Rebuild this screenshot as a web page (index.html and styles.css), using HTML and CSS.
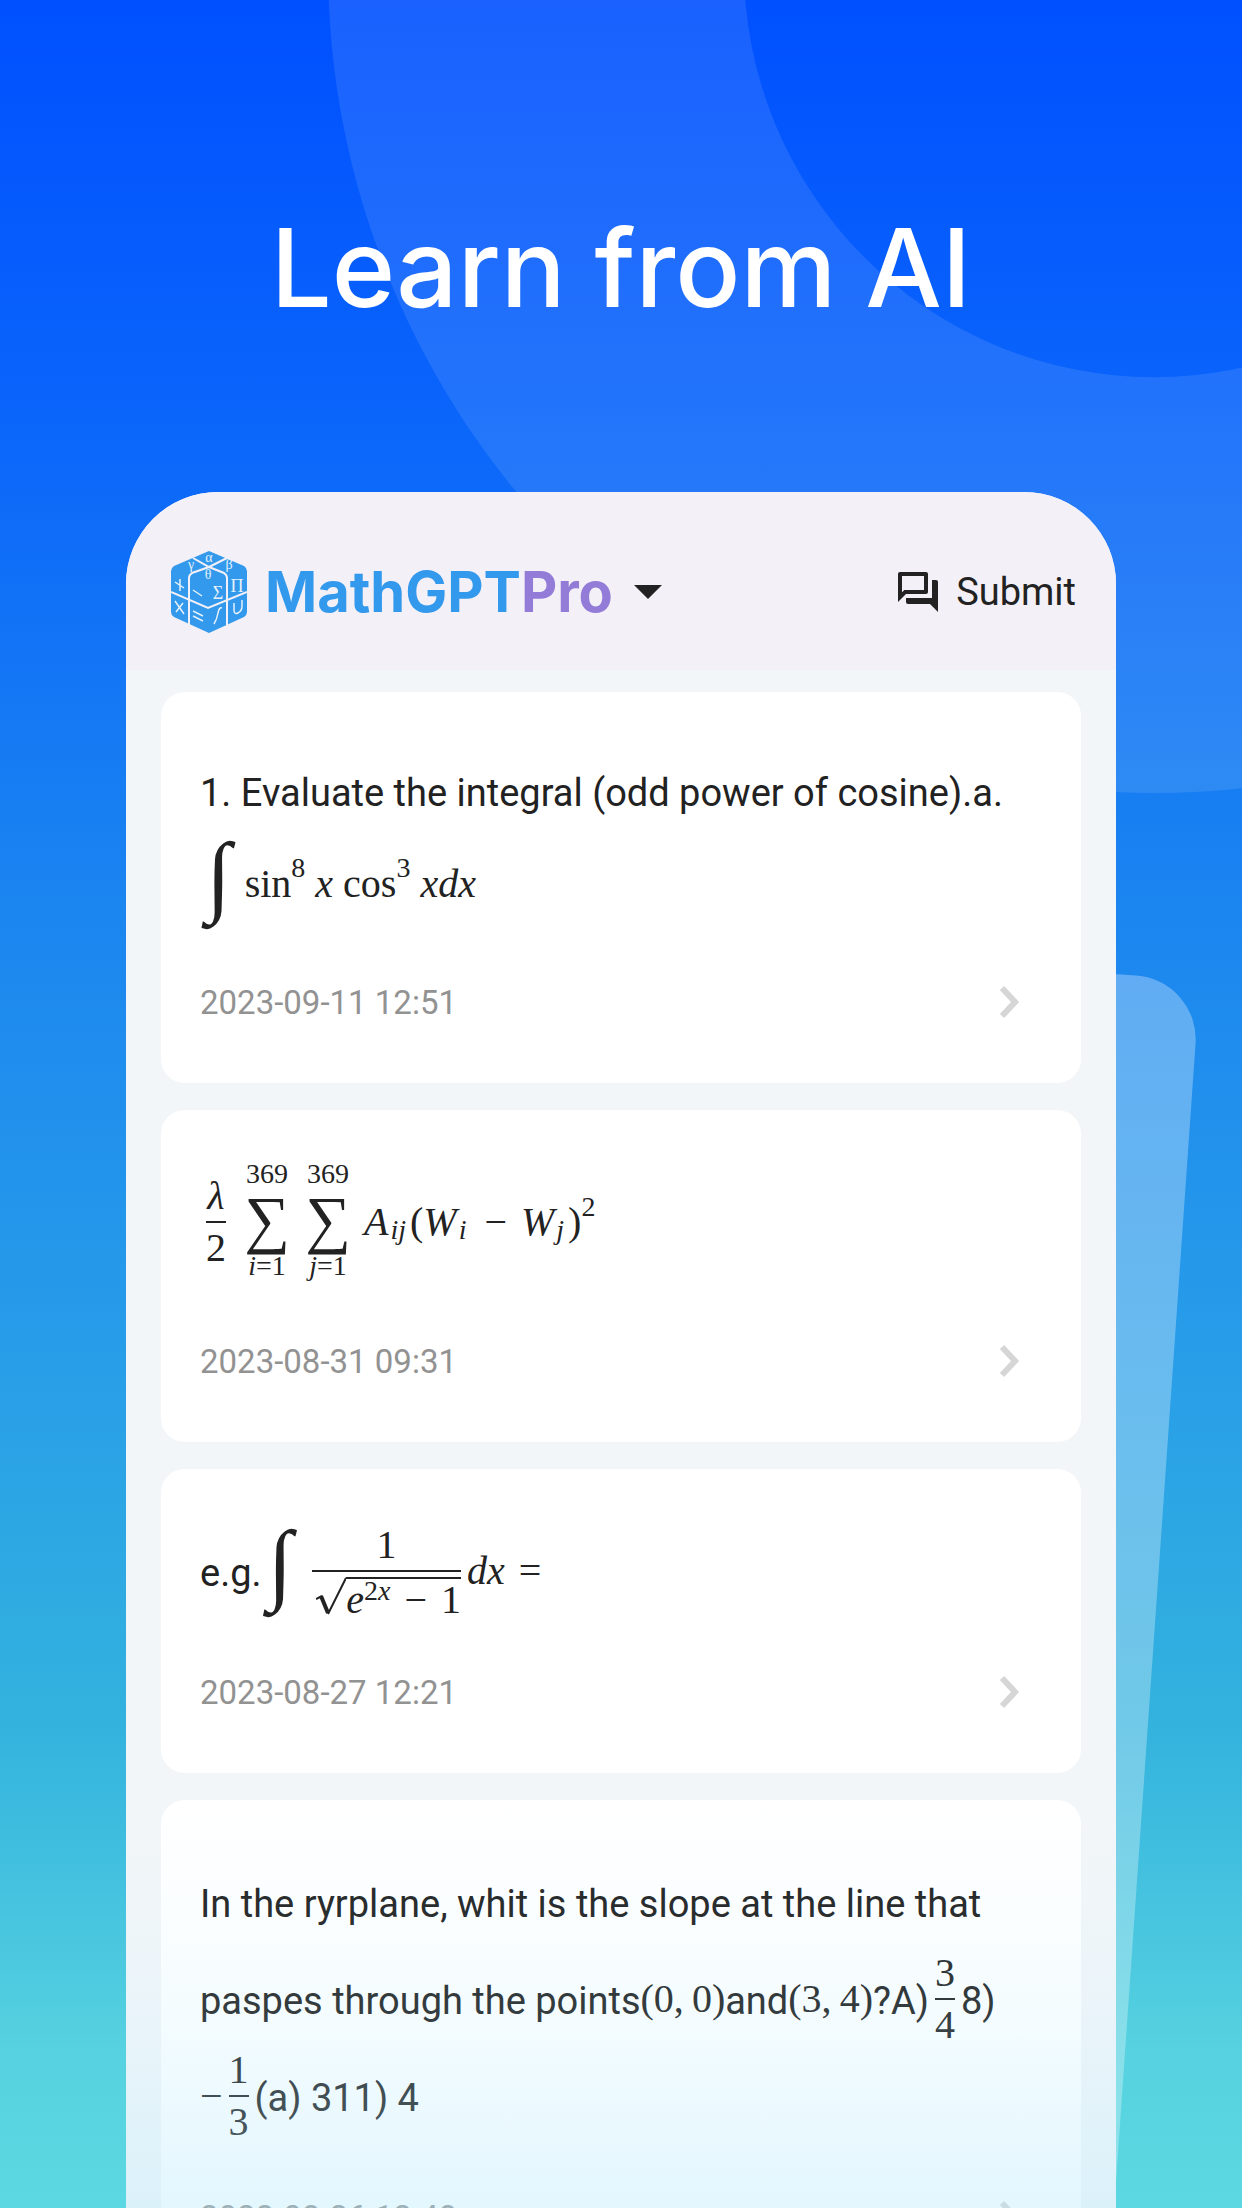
FILE: index.html
```html
<!DOCTYPE html>
<html lang="en">
<head>
<meta charset="utf-8">
<meta name="viewport" content="width=device-width, initial-scale=1">
<title>MathGPTPro – Learn from AI</title>
<link rel="stylesheet" href="styles.css">
</head>
<body>
<div class="scene">
  <svg class="backdrop" viewBox="0 0 1242 2208" preserveAspectRatio="xMidYMin slice" aria-hidden="true">
    <path class="ring" fill-rule="evenodd" d="M328-33a826 826 0 1 0 1652 0a826 826 0 1 0-1652 0zM744-33a410 410 0 1 0 820 0a410 410 0 1 0-820 0z"/>
    <rect class="ghost" x="400" y="980" width="800" height="1600" rx="64" transform="rotate(4 1200 980)"/>
  </svg>

  <h1 class="headline">Learn from AI</h1>

  <main class="panel">
    <header class="topbar">
      <button class="brand" type="button" aria-label="MathGPTPro menu">
        <svg class="brand-cube" viewBox="0 0 76 82" aria-hidden="true">
          <path class="cube-body" d="M38 0 73 15Q76 17 76 20V61Q76 64 73 66L38 82 3 66Q0 64 0 61V20Q0 17 3 15Z"/>
          <path class="cube-line" d="M22 7 38 16 53 22Q56 24 56 27V74M56 7 38 16 21 22Q18 24 18 27V74M0 41 37 57 76 41"/>
          <path class="cube-mark" d="M4 31 13 37M9 28V40M22 39 31 45M4 50 13 63M12 52 5 61M22 60 32 65M22 65 32 70M51 57Q48 56 47 62T43 73M63 52V59Q63 64 67 62T71 55V49"/>
          <text class="cube-text" x="38" y="11">α</text>
          <text class="cube-text" x="20" y="18">γ</text>
          <text class="cube-text" x="58" y="18">β</text>
          <text class="cube-text" x="37" y="28">θ</text>
          <text class="cube-text cube-big" x="47" y="48">Σ</text>
          <text class="cube-text cube-big" x="66" y="41">Π</text>
        </svg>
        <span class="brand-name">MathGPT<span class="brand-pro">Pro</span></span>
        <svg class="caret" viewBox="0 0 28 14" aria-hidden="true"><path d="M0 0H28L14 14Z"/></svg>
      </button>
      <button class="submit" type="button">
        <svg class="submit-icon" viewBox="0 0 24 24" aria-hidden="true"><path d="M15 4v7H5.170L4 12.170V4h11m1-2H3c-.550 0-1 .450-1 1v14l4-4h10c.550 0 1-.450 1-1V3c0-.550-.450-1-1-1zm5 4h-2v9H6v2c0 .550.450 1 1 1h11l4 4V7c0-.550-.450-1-1-1z"/></svg>
        <span>Submit</span>
      </button>
    </header>

    <div class="feed">
      <article class="card">
        <p class="line">1. Evaluate the integral (odd power of cosine).a.</p>
        <p class="line math"><i class="integral">∫</i><span>sin</span><sup>8</sup><i class="var">x</i><span class="fn">cos</span><sup>3</sup><i class="var">xdx</i></p>
        <a class="card-foot" href="#q1" aria-label="Open question"><time>2023-09-11 12:51</time><svg class="chevron" viewBox="0 0 22 34" aria-hidden="true"><path d="M3 3 16 17 3 31"/></svg></a>
      </article>

      <article class="card">
        <p class="line line-sum math"><span class="frac"><i>λ</i><span class="den">2</span></span><span class="sum"><span class="limit">369</span><span class="sigma">∑</span><span class="limit"><i>i</i>=1</span></span><span class="sum"><span class="limit">369</span><span class="sigma">∑</span><span class="limit"><i>j</i>=1</span></span><i class="var">A</i><sub><i>ij</i></sub><span>(</span><i>W</i><sub><i>i</i></sub><span class="op">−</span><i>W</i><sub><i>j</i></sub><span>)</span><sup>2</sup></p>
        <a class="card-foot" href="#q2" aria-label="Open question"><time>2023-08-31 09:31</time><svg class="chevron" viewBox="0 0 22 34" aria-hidden="true"><path d="M3 3 16 17 3 31"/></svg></a>
      </article>

      <article class="card">
        <p class="line line-tall"><span>e.g.</span><span class="math"><i class="integral">∫</i><span class="frac"><span>1</span><span class="den root"><svg class="radical" viewBox="0 0 30 44" aria-hidden="true"><path class="radical-thin" d="M0 22 6 19M12 37 30 1"/><path class="radical-thick" d="M5 19 12 36"/></svg><span class="radicand"><i>e</i><sup>2<i>x</i></sup><span class="op">−</span>1</span></span></span><i>dx</i><span class="op">=</span></span></p>
        <a class="card-foot" href="#q3" aria-label="Open question"><time>2023-08-27 12:21</time><svg class="chevron" viewBox="0 0 22 34" aria-hidden="true"><path d="M3 3 16 17 3 31"/></svg></a>
      </article>

      <article class="card">
        <p class="line line-tall">In the ryrplane, whit is the slope at the line that</p>
        <p class="line line-tall"><span>paspes through the points</span><span class="math">(0,&thinsp;0)</span><span>and</span><span class="math">(3,&thinsp;4)</span><span>?A)</span><span class="math"><span class="frac"><span>3</span><span class="den">4</span></span></span><span>8)</span></p>
        <p class="line line-tall"><span class="math"><span>−</span><span class="frac"><span>1</span><span class="den">3</span></span></span><span>(a) 311) 4</span></p>
        <a class="card-foot" href="#q4" aria-label="Open question"><time>2023-08-26 12:48</time><svg class="chevron" viewBox="0 0 22 34" aria-hidden="true"><path d="M3 3 16 17 3 31"/></svg></a>
      </article>
    </div>
    <div class="fade"></div>
  </main>
</div>
</body>
</html>
```
FILE: styles.css
```css
* {
  box-sizing: border-box;
}

body {
  margin: 0;
  font-family: Roboto, "Liberation Sans", sans-serif;
  color: #222;
}

button {
  padding: 0;
  border: 0;
  background: none;
  font: inherit;
  color: inherit;
}

.scene {
  position: relative;
  display: flex;
  flex-direction: column;
  height: 100vh;
  overflow: hidden;
  background: linear-gradient(#0050ff 0%, #0a64fb 18%, #1b85f0 41%, #289ee8 62%, #33b2de 78%, #56d2e0 93%, #5cd8e2 100%);
}

.backdrop {
  position: absolute;
  inset: 0;
  width: 100%;
  height: 100%;
}

.ring {
  fill: #fff;
  fill-opacity: 0.1;
}

.ghost {
  fill: #fff;
  fill-opacity: 0.3;
}

.headline {
  position: relative;
  margin: 0;
  padding: 204px 0 160px;
  font-family: Inter, sans-serif;
  font-size: 108px;
  font-weight: 500;
  line-height: 128px;
  text-align: center;
  color: #fff;
}

.panel {
  position: relative;
  flex: 1;
  min-height: 0;
  margin: 0 126px;
  overflow: hidden;
  border-radius: 92px 92px 0 0;
  background: #f3f6f9;
}

.topbar {
  display: flex;
  align-items: center;
  justify-content: space-between;
  height: 178px;
  padding: 22px 40px 0 45px;
  background: #f3f0f7;
}

.brand,
.submit {
  display: flex;
  align-items: center;
}

.brand-cube {
  width: 76px;
  height: 82px;
  margin-right: 18px;
}

.cube-body {
  fill: #3399ec;
}

.cube-line {
  fill: none;
  stroke: #f3f0f7;
  stroke-width: 2;
}

.cube-mark {
  fill: none;
  stroke: #e4f1fc;
  stroke-width: 1.5;
}

.cube-text {
  font-family: "Liberation Serif", serif;
  font-size: 14px;
  text-anchor: middle;
  fill: #e4f1fc;
}

.cube-big {
  font-size: 18px;
}

.brand-name {
  font-family: Inter, sans-serif;
  font-size: 56px;
  font-weight: 700;
  line-height: 72px;
  color: #3399ec;
}

.brand-pro {
  color: #937cd8;
}

.caret {
  width: 28px;
  height: 14px;
  margin-left: 21px;
  fill: #222;
}

.submit {
  gap: 14px;
  font-size: 38px;
}

.submit-icon {
  width: 48px;
  height: 48px;
  fill: #222;
}

.feed {
  display: flex;
  flex-direction: column;
  gap: 27px;
  padding: 22px 35px;
}

.card {
  padding: 55px 60px 51px 39px;
  border-radius: 24px;
  background: #fff;
}

.line {
  display: flex;
  align-items: center;
  height: 92px;
  margin: 0;
  font-size: 38px;
  white-space: nowrap;
}

.line-tall {
  height: 97px;
}

.line-sum {
  height: 125px;
}

.math {
  display: flex;
  align-items: center;
  padding-bottom: 4px;
  font-family: "Liberation Serif", serif;
  font-size: 40px;
}

.line-sum.math {
  padding-bottom: 12px;
}

.math sup,
.math sub {
  font-size: 28px;
  line-height: 28px;
  vertical-align: baseline;
}

.math sup {
  padding-bottom: 30px;
}

.math sub {
  margin: 0 4px 0 2px;
  padding-top: 16px;
}

.var,
.fn {
  margin-left: 10px;
}

.op {
  margin: 0 14px;
}

.integral {
  margin: 0 14px 0 6px;
  padding-bottom: 16px;
  font-size: 90px;
  line-height: 80px;
}

.frac {
  display: flex;
  flex-direction: column;
  align-items: center;
  margin: 0 6px;
  line-height: 50px;
}

.den {
  border-top: 2px solid;
}

.sum {
  display: flex;
  flex-direction: column;
  align-items: center;
  width: 52px;
  margin-left: 9px;
  padding-bottom: 4px;
}

.limit {
  font-size: 28px;
  line-height: 30px;
}

.sigma {
  font-size: 64px;
  line-height: 62px;
}

.root {
  display: flex;
  padding: 5px 0 0 4px;
}

.radical {
  width: 30px;
  height: 44px;
  fill: none;
  stroke: #222;
}

.radical-thin {
  stroke-width: 2;
}

.radical-thick {
  stroke-width: 4;
}

.radicand {
  display: flex;
  align-items: center;
  height: 44px;
  border-top: 2px solid;
  line-height: 38px;
}

.radicand sup {
  padding-bottom: 18px;
}

.card-foot {
  display: flex;
  align-items: center;
  justify-content: space-between;
  height: 60px;
  margin-top: 41px;
  font-size: 33px;
  color: #929292;
  text-decoration: none;
}

.chevron {
  width: 22px;
  height: 34px;
  fill: none;
  stroke: #d6d6d6;
  stroke-width: 6;
}

.fade {
  position: absolute;
  inset: auto 0 0;
  height: 408px;
  pointer-events: none;
  background: linear-gradient(rgba(174, 232, 252, 0) 0%, rgba(174, 232, 252, 0.060) 28%, rgba(174, 232, 252, 0.130) 51%, rgba(174, 232, 252, 0.230) 74%, rgba(174, 232, 252, 0.350) 100%);
}
```
